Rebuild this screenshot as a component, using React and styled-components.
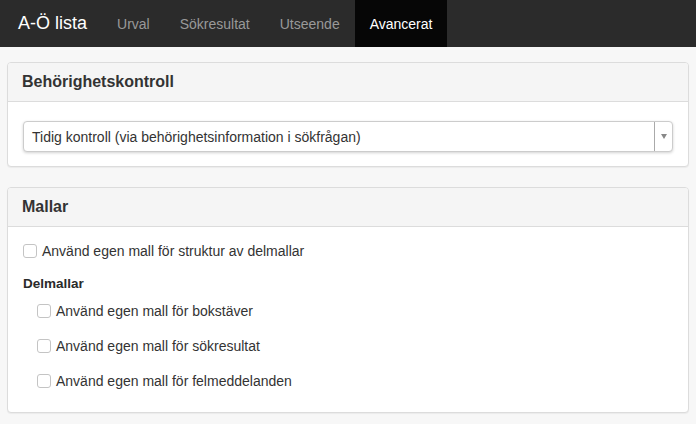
import styled, { createGlobalStyle } from "styled-components";

const Global = createGlobalStyle`
  html, body {
    margin: 0;
    padding: 0;
    background: #f7f7f7;
    font-family: "Liberation Sans", Arial, sans-serif;
    font-size: 14px;
    color: #333;
  }
`

const Navbar = styled.nav`
  display: flex;
  align-items: stretch;
  height: 47px;
  background-color: #2b2b2b;
`

const Brand = styled.div`
  display: flex;
  align-items: center;
  padding: 0 15px 0 18px;
  color: #fff;
  font-size: 18px;
`

const NavItem = styled.div`
  display: flex;
  align-items: center;
  padding: 0 15px;
  color: ${(p) => (p.$active ? "#fff" : "#999")};
  background-color: ${(p) => (p.$active ? "#060606" : "transparent")};
  font-size: 14px;
`

const Content = styled.main`
  display: flex;
  flex-direction: column;
  gap: 20px;
  padding: 15px 7px 12px 7px;
`

const Panel = styled.section`
  background: #fff;
  border: 1px solid #dcdcdc;
  border-radius: 4px;
  box-shadow: 0 1px 1px rgba(0, 0, 0, 0.05);
  overflow: hidden;
`

const PanelHeading = styled.h3`
  margin: 0;
  padding: 0 14px;
  height: 38px;
  display: flex;
  align-items: center;
  background: #f5f5f5;
  border-bottom: 1px solid #dcdcdc;
  font-size: 16px;
  font-weight: bold;
  color: #333;
`

const PanelBody = styled.div`
  padding: ${(p) => p.$pad || "15px"};
`

const Select = styled.div`
  display: flex;
  align-items: stretch;
  height: 29px;
  border: 1px solid #ccc;
  border-radius: 4px;
  background: #fff;
  box-shadow: 0 1px 3px rgba(0, 0, 0, 0.18);
`

const SelectText = styled.div`
  flex: 1;
  display: flex;
  align-items: center;
  padding-left: 8px;
  color: #333;
`

const SelectArrow = styled.div`
  width: 17px;
  border-left: 1px solid #aaa;
  display: flex;
  align-items: center;
  justify-content: center;
  &::after {
    content: "";
    border-left: 3px solid transparent;
    border-right: 3px solid transparent;
    border-top: 5px solid #888;
  }
`

const CheckRow = styled.label`
  display: flex;
  align-items: center;
  gap: 5px;
  height: 20px;
  margin-left: ${(p) => (p.$indent ? "14px" : "0")};
  margin-bottom: ${(p) => p.$mb || "0"};
  color: #333;
`

const Box = styled.span`
  width: 14px;
  height: 14px;
  box-sizing: border-box;
  border: 1px solid #c4c4c4;
  border-radius: 3px;
  background: #fff;
  flex: none;
`

const SubLabel = styled.div`
  font-weight: bold;
  font-size: 13.5px;
  height: 18px;
  margin: 13px 0 9px;
  color: #2a2a2a;
  display: flex;
  align-items: center;
`

const tabs = ["Urval", "Sökresultat", "Utseende", "Avancerat"];
const subs = [
  "Använd egen mall för bokstäver",
  "Använd egen mall för sökresultat",
  "Använd egen mall för felmeddelanden",
];

export default function App() {
  return (
    <>
      <Global />
      <Navbar>
        <Brand>A-Ö lista</Brand>
        {tabs.map((t) => (
          <NavItem key={t} $active={t === "Avancerat"}>{t}</NavItem>
        ))}
      </Navbar>
      <Content>
        <Panel>
          <PanelHeading>Behörighetskontroll</PanelHeading>
          <PanelBody $pad="19px 15px 14px">
            <Select>
              <SelectText>Tidig kontroll (via behörighetsinformation i sökfrågan)</SelectText>
              <SelectArrow />
            </Select>
          </PanelBody>
        </Panel>
        <Panel>
          <PanelHeading>Mallar</PanelHeading>
          <PanelBody $pad="14px 15px 21px">
            <CheckRow>
              <Box />
              Använd egen mall för struktur av delmallar
            </CheckRow>
            <SubLabel>Delmallar</SubLabel>
            {subs.map((s, i) => (
              <CheckRow key={s} $indent $mb={i < subs.length - 1 ? "15px" : "0"}>
                <Box />
                {s}
              </CheckRow>
            ))}
          </PanelBody>
        </Panel>
      </Content>
    </>
  );
}
